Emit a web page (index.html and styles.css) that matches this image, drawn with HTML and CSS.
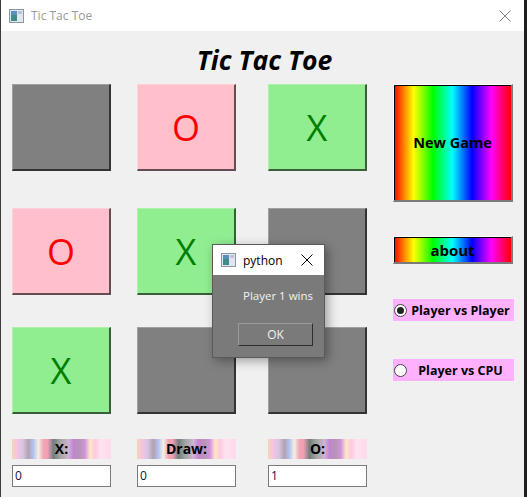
FILE: index.html
```html
<!DOCTYPE html>
<html>
<head>
<meta charset="utf-8">
<link rel="stylesheet" href="styles.css">
</head>
<body>
<div class="screen">
  <div class="window">
    <div class="titlebar">
      <svg class="appicon" width="15" height="14" viewBox="0 0 15 14">
        <rect x="0.5" y="0.5" width="14" height="13" fill="#dfe6ee" stroke="#8a96a3"/>
        <rect x="2" y="2" width="6" height="10" fill="#3f8a8a"/>
        <rect x="2" y="2" width="6" height="4" fill="#5b8fc0"/>
        <rect x="9" y="2" width="4" height="3" fill="#b7c7d8"/>
      </svg>
      <span class="wintitle">Tic Tac Toe</span>
      <svg class="closeicon" width="12" height="12" viewBox="0 0 12 12">
        <path d="M0.5 0.5 L11.5 11.5 M11.5 0.5 L0.5 11.5" stroke="#808080" stroke-width="1"/>
      </svg>
    </div>
    <div class="content">
      <h1 class="heading">Tic Tac Toe</h1>
      <div class="main">
        <div class="board">
          <div class="cell cell-empty"></div>
          <div class="cell cell-o">O</div>
          <div class="cell cell-x">X</div>
          <div class="cell cell-o">O</div>
          <div class="cell cell-x">X</div>
          <div class="cell cell-empty"></div>
          <div class="cell cell-x">X</div>
          <div class="cell cell-empty"></div>
          <div class="cell cell-empty"></div>
          <div class="score-label">X:</div>
          <div class="score-label">Draw:</div>
          <div class="score-label">O:</div>
          <div class="entry">0</div>
          <div class="entry">0</div>
          <div class="entry">1</div>
        </div>
        <div class="side">
          <div class="rainbow-btn newgame"><span>New Game</span></div>
          <div class="rainbow-btn about"><span>about</span></div>
          <div class="radio radio-first">
            <span class="radio-dot checked"></span>
            <span class="radio-text">Player vs Player</span>
          </div>
          <div class="radio radio-second">
            <span class="radio-dot"></span>
            <span class="radio-text">Player vs CPU</span>
          </div>
        </div>
      </div>
    </div>
  </div>
  <div class="dialog">
    <div class="dialog-title">
      <svg class="appicon" width="15" height="14" viewBox="0 0 15 14">
        <rect x="0.5" y="0.5" width="14" height="13" fill="#dfe6ee" stroke="#8a96a3"/>
        <rect x="2" y="2" width="6" height="10" fill="#3f8a8a"/>
        <rect x="2" y="2" width="6" height="4" fill="#5b8fc0"/>
        <rect x="9" y="2" width="4" height="3" fill="#b7c7d8"/>
      </svg>
      <span class="dialog-name">python</span>
      <svg class="dialog-close" width="12" height="12" viewBox="0 0 12 12">
        <path d="M0.5 0.5 L11.5 11.5 M11.5 0.5 L0.5 11.5" stroke="#000" stroke-width="1"/>
      </svg>
    </div>
    <div class="dialog-body">
      <div class="dialog-msg">Player 1 wins</div>
      <div class="dialog-ok">OK</div>
    </div>
  </div>
</div>
</body>
</html>
```

FILE: styles.css
```css
* { box-sizing: border-box; }
html, body { margin: 0; padding: 0; }
body {
  width: 527px;
  height: 497px;
  background: #1e1e1e;
  font-family: "Open Sans", "Noto Sans", sans-serif;
  overflow: hidden;
}
.screen { position: relative; width: 527px; height: 497px; }
.window {
  width: 524px;
  height: 497px;
  border-left: 1px solid #3c3c3c;
  background: #f0f0f0;
}
.titlebar {
  height: 31px;
  background: #ffffff;
  display: flex;
  align-items: center;
  padding-left: 8px;
}
.appicon { display: block; flex: none; }
.wintitle {
  margin-left: 7px;
  font-size: 12px;
  color: #999999;
  flex: 1;
}
.closeicon { margin-right: 13px; display: block; }
.content { padding-left: 11px; }
.heading {
  margin: 0;
  height: 53px;
  padding-top: 6px;
  line-height: 47px;
  font-size: 26.5px;
  font-weight: 700;
  font-style: italic;
  text-align: center;
  color: #000;
  padding-left: 4px;
  padding-right: 11px;
}
.main { display: flex; }
.board {
  display: grid;
  grid-template-columns: 125px 131px 125px;
  grid-template-rows: 124px 119px 112px 26px 22px;
}
.cell {
  width: 99px;
  height: 87px;
  display: flex;
  align-items: center;
  justify-content: center;
  font-size: 36px;
  border-top: 1px solid rgba(255,255,255,0.25);
  border-left: 1px solid rgba(255,255,255,0.25);
  border-right: 2px solid rgba(0,0,0,0.6);
  border-bottom: 2px solid rgba(0,0,0,0.6);
}
.cell-empty { background: #808080; }
.cell-o { background: #ffc0cb; color: #ff0000; }
.cell-x { background: #90ee90; color: #008000; }
.score-label {
  width: 99px;
  height: 20px;
  line-height: 20px;
  text-align: center;
  font-size: 14px;
  font-weight: 700;
  color: #000;
  background: linear-gradient(to right,
    #f3d6b3 0%, #f6c3e0 5%, #d6c4e4 11%, #b3a2b0 16.5%, #b2c2f2 21.5%,
    #f3f1e2 26.6%, #f2a6b6 31.6%, #ef9fb3 36%, #727e80 42%, #a0a5a0 48.5%,
    #cfb3d6 57%, #c384d2 62%, #b697b4 68.7%, #d592e0 73.7%, #ffe8c4 78.8%,
    #ffc8e2 84%, #ffe2f0 89%, #ffd8ec 100%);
}
.entry {
  width: 99px;
  height: 22px;
  background: #fff;
  border: 1px solid #7a7a7a;
  font-size: 12px;
  line-height: 20px;
  padding-left: 2px;
  color: #101040;
}
.side {
  display: flex;
  flex-direction: column;
  width: 121px;
}
.rainbow-btn {
  width: 120px;
  border-top: 1px solid #fff;
  border-left: 1px solid #fff;
  border-right: 2px solid #7a7a7a;
  border-bottom: 2px solid #7a7a7a;
  background: linear-gradient(to right, #ff0000 0%, #ffff00 16.7%, #00ff00 33.3%, #00ffff 50%, #0000ff 66.7%, #ff00ff 83.3%, #ff0000 100%);
  box-shadow: inset 1px 1px 0 #000;
  display: flex;
  align-items: center;
  justify-content: center;
  font-weight: 700;
  color: #000;
}
.newgame { height: 118px; font-size: 14.5px; }
.about { height: 28px; margin-top: 34px; font-size: 15px; }
.radio {
  width: 121px;
  height: 22px;
  background: #ffb0ff;
  display: flex;
  align-items: center;
  padding-left: 1px;
}
.radio-first { margin-top: 35px; }
.radio-second { margin-top: 38px; }
.radio-dot {
  width: 13px;
  height: 13px;
  border-radius: 50%;
  background: #fff;
  border: 1px solid #444;
  flex: none;
  display: flex;
  align-items: center;
  justify-content: center;
}
.radio-dot.checked::after {
  content: "";
  width: 7px;
  height: 7px;
  border-radius: 50%;
  background: #222;
}
.radio-text {
  flex: 1;
  text-align: center;
  font-size: 12.5px;
  font-weight: 700;
  color: #000;
}
.dialog {
  position: absolute;
  left: 212px;
  top: 244px;
  width: 113px;
  height: 114px;
  border: 1px solid #5a5a5a;
  box-shadow: 3px 3px 10px rgba(0,0,0,0.35);
  background: #7a7a7a;
}
.dialog-title {
  height: 30px;
  background: #fff;
  display: flex;
  align-items: center;
  padding-left: 8px;
}
.dialog-name {
  margin-left: 7px;
  font-size: 12px;
  color: #000;
  flex: 1;
}
.dialog-close { margin-right: 11px; display: block; }
.dialog-body {
  display: flex;
  flex-direction: column;
  align-items: flex-end;
  padding-right: 11px;
}
.dialog-msg {
  margin-top: 12px;
  height: 17px;
  line-height: 17px;
  font-size: 11.5px;
  color: #f2f2f2;
}
.dialog-ok {
  margin-top: 19px;
  width: 75px;
  height: 23px;
  border: 1px solid #9a9a9a;
  border-right-color: #2e2e2e;
  border-bottom-color: #2e2e2e;
  line-height: 21px;
  text-align: center;
  font-size: 12px;
  color: #f2f2f2;
}
```
